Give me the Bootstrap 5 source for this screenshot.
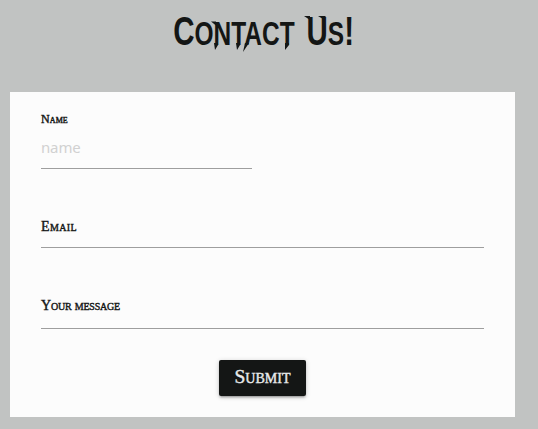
<!DOCTYPE html>
<html lang="en">
<head>
<meta charset="utf-8">
<meta name="viewport" content="width=device-width, initial-scale=1">
<title>Contact Us!</title>
<link href="https://cdn.jsdelivr.net/npm/bootstrap@5.3.0/dist/css/bootstrap.min.css" rel="stylesheet">
<style>
body{background:#c1c3c2;color:#141615;height:429px;overflow:hidden;font-family:"Liberation Serif",serif}
.page-title{height:92px;margin-right:11px}
.title-text{font:700 34px/60px "Liberation Sans",sans-serif;white-space:nowrap;transform:scaleX(.72);margin:1px 0 0;word-spacing:7px}
.title-text .cap{font-size:41px}
.spikes{left:160px;top:0;width:210px;height:60px}
.contact-panel{margin-left:10px;width:505px;height:325px;background:#fcfcfc;padding:0 31px}
.field{border-bottom:1px solid #9e9e9e}
.field-name{width:211px;height:77px;padding-top:19px}
.field-email{height:79px;padding-top:48px}
.field-message{height:81px;padding-top:48px}
.field label{display:block;font-variant:small-caps;font-size:14px;line-height:20px;letter-spacing:-.2px;-webkit-text-stroke:.4px #141615;white-space:nowrap}
.field-email label{letter-spacing:.35px}
.field-name label{font-size:12px;line-height:16px;letter-spacing:.1px}
.field input{width:100%;height:40px;border:0;outline:0;padding:0;background:transparent;font:15px "Noto Sans",sans-serif;letter-spacing:-.15px}
.field input::placeholder{color:#d1d1d1;opacity:1}
.send,.send:hover{width:87px;height:36px;margin-top:31px;border-radius:2px;background:#141615;color:#e8eaea;font-variant:small-caps;font-size:19.5px;line-height:34px;padding:0 0 2px;border:0;-webkit-text-stroke:.4px #e8eaea;box-shadow:0 2px 2px rgba(0,0,0,.14),0 3px 1px -2px rgba(0,0,0,.12),0 1px 5px rgba(0,0,0,.2)}
</style>
</head>
<body>
<header class="page-title position-relative d-flex justify-content-center align-items-start">
<h1 class="title-text"><span class="cap">C</span>ONTACT <span class="cap">U</span>S<span class="cap">!</span></h1>
<svg class="spikes position-absolute" viewBox="0 0 210 60" fill="#141615" aria-hidden="true"><path d="M54 43h4v2l-3 5zM76 43h4v2l-3 5zM85 43h4l-6 9zM125 43h4v2l-4 5zM51 21.500h5v4zM144 16h6v4zM158 16h8l-3 3z"/></svg>
</header>
<main class="contact-panel">
<form class="d-flex flex-column">
<div class="field field-name"><label for="name">Name</label><input id="name" type="text" placeholder="name"></div>
<div class="field field-email"><label>Email</label></div>
<div class="field field-message"><label>Your message</label></div>
<button type="button" class="btn send align-self-center">Submit</button>
</form>
</main>
<script src="https://cdn.jsdelivr.net/npm/bootstrap@5.3.0/dist/js/bootstrap.bundle.min.js"></script>
</body>
</html>
